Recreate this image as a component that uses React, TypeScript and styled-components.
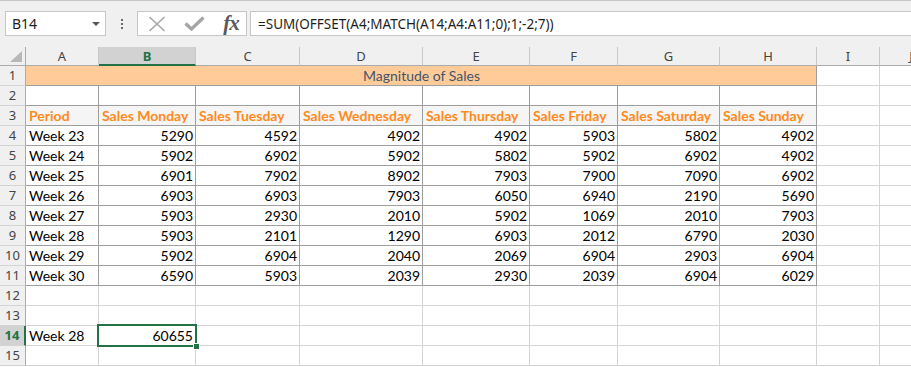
import styled, { createGlobalStyle } from "styled-components";

const GlobalStyle = createGlobalStyle`
  html, body {
    margin: 0;
    padding: 0;
    background: #ffffff;
    overflow: hidden;
  }
  body {
    font-family: Lato, "Liberation Sans", sans-serif;
  }
`;

const GREEN = "#217346";
const GRID = "#d4d4d4";
const EDGE = "#9e9e9e";
const UI_FONT = `"Noto Sans", "Open Sans", "Liberation Sans", sans-serif`;
const CELL_FONT = `Lato, "Liberation Sans", sans-serif`;

// widths include the 1px right border of each column
const COL_WIDTHS = [26, 73, 97, 104, 123, 107, 88, 102, 97, 63, 63];
const COLS = ["A", "B", "C", "D", "E", "F", "G", "H", "I", "J"];
const DAYS = ["Monday", "Tuesday", "Wednesday", "Thursday", "Friday", "Saturday", "Sunday"];

const weeks: [string, number[]][] = [
  ["Week 23", [5290, 4592, 4902, 4902, 5903, 5802, 4902]],
  ["Week 24", [5902, 6902, 5902, 5802, 5902, 6902, 4902]],
  ["Week 25", [6901, 7902, 8902, 7903, 7900, 7090, 6902]],
  ["Week 26", [6903, 6903, 7903, 6050, 6940, 2190, 5690]],
  ["Week 27", [5903, 2930, 2010, 5902, 1069, 2010, 7903]],
  ["Week 28", [5903, 2101, 1290, 6903, 2012, 6790, 2030]],
  ["Week 29", [5902, 6904, 2040, 2069, 6904, 2903, 6904]],
  ["Week 30", [6590, 5903, 2039, 2930, 2039, 6904, 6029]],
];

const Window = styled.div`
  width: 911px;
  height: 367px;
  overflow: hidden;
  display: flex;
  flex-direction: column;
  background: #ffffff;
`;

const FormulaBar = styled.div`
  height: 47px;
  flex: none;
  box-sizing: border-box;
  border-top: 1px solid #c6c6c6;
  background: #f0f0f0;
  display: flex;
  align-items: flex-start;
  padding: 10px 0 0 5px;
`;

const NameBox = styled.div`
  width: 101px;
  height: 25px;
  box-sizing: border-box;
  border: 1px solid #c6c6c6;
  background: #ffffff;
  display: flex;
  align-items: center;
  justify-content: space-between;
  padding: 0 5px 0 6px;
  font-family: ${UI_FONT};
  font-size: 14px;
  color: #1e1e1e;
`;

const DropArrow = styled.span`
  width: 0;
  height: 0;
  border-left: 4px solid transparent;
  border-right: 4px solid transparent;
  border-top: 4px solid #555555;
`;

const Grip = styled.div`
  width: 31px;
  height: 25px;
  display: flex;
  flex-direction: column;
  align-items: center;
  justify-content: center;
  gap: 2px;

  span {
    width: 2px;
    height: 2px;
    background: #6a6a6a;
  }
`;

const FxBox = styled.div`
  width: 110px;
  height: 25px;
  box-sizing: border-box;
  border: 1px solid #c6c6c6;
  background: #ffffff;
  display: flex;
  align-items: center;
  padding-left: 9px;
`;

const FxButton = styled.div<{ $w: number }>`
  width: ${(p) => p.$w}px;
  height: 23px;
  display: flex;
  align-items: center;
  justify-content: center;
`;

const FxLabel = styled.span`
  font-family: "Liberation Serif", "DejaVu Serif", serif;
  font-style: italic;
  font-weight: bold;
  font-size: 21px;
  color: #595959;
  letter-spacing: -1px;
  line-height: 1;
  margin-top: -1px;
`;

const FormulaInput = styled.div`
  flex: 1;
  height: 25px;
  margin-left: 3px;
  box-sizing: border-box;
  border: 1px solid #c6c6c6;
  border-right: none;
  background: #ffffff;
  display: flex;
  align-items: center;
  padding-left: 7px;
  font-family: ${UI_FONT};
  font-size: 13.5px;
  color: #1e1e1e;
  white-space: nowrap;
`;

const Sheet = styled.div`
  flex: 1;
  width: max-content;
  display: grid;
  grid-template-columns: ${COL_WIDTHS.map((w) => `${w}px`).join(" ")};
  grid-template-rows: 19px repeat(15, 20px);
  background: #ffffff;
`;

const Corner = styled.div`
  box-sizing: border-box;
  background: #f0f0f0;
  border-right: 1px solid #ababab;
  border-bottom: 1px solid #ababab;
  display: flex;
  align-items: flex-end;
  justify-content: flex-end;
  padding: 0 3px 3px 0;
`;

const ColHead = styled.div<{ $active?: boolean }>`
  box-sizing: border-box;
  background: ${(p) => (p.$active ? "#d2d2d2" : "#f0f0f0")};
  border-right: 1px solid #c8c8c8;
  border-bottom: ${(p) => (p.$active ? `2px solid ${GREEN}` : "1px solid #ababab")};
  font-family: ${UI_FONT};
  font-size: 13px;
  line-height: 19px;
  text-align: center;
  color: ${(p) => (p.$active ? GREEN : "#444444")};
  font-weight: ${(p) => (p.$active ? "bold" : "normal")};
  overflow: hidden;
`;

const RowHead = styled.div<{ $active?: boolean }>`
  box-sizing: border-box;
  background: ${(p) => (p.$active ? "#d2d2d2" : "#f0f0f0")};
  border-right: ${(p) => (p.$active ? `2px solid ${GREEN}` : "1px solid #ababab")};
  border-bottom: 1px solid ${GRID};
  font-family: ${UI_FONT};
  font-size: 13px;
  line-height: 19px;
  text-align: center;
  color: ${(p) => (p.$active ? GREEN : "#444444")};
  font-weight: ${(p) => (p.$active ? "bold" : "normal")};
`;

const Cell = styled.div<{
  $edge?: boolean;
  $align?: "left" | "right" | "center";
  $span?: number;
}>`
  box-sizing: border-box;
  grid-column: ${(p) => (p.$span ? `span ${p.$span}` : "auto")};
  border-right: 1px solid ${(p) => (p.$edge ? EDGE : GRID)};
  border-bottom: 1px solid ${(p) => (p.$edge ? EDGE : GRID)};
  background: #ffffff;
  padding: 0 2px 0 3px;
  font-family: ${CELL_FONT};
  font-size: 14px;
  line-height: 19px;
  color: #000000;
  text-align: ${(p) => p.$align ?? "left"};
  white-space: nowrap;
  overflow: hidden;
`;

const TitleCell = styled(Cell)`
  background: #ffcc99;
  color: #44546a;
`;

const HeaderCell = styled(Cell)`
  background: #f5f5f5;
  color: #ff8a1c;
  font-weight: bold;
`;

const ActiveCell = styled(Cell)`
  position: relative;
  overflow: visible;

  &::after {
    content: "";
    position: absolute;
    top: -2px;
    left: -2px;
    right: -2px;
    bottom: -2px;
    border: 2px solid ${GREEN};
    z-index: 1;
  }

  &::before {
    content: "";
    position: absolute;
    right: -5px;
    bottom: -5px;
    width: 5px;
    height: 5px;
    background: ${GREEN};
    border: 1px solid #ffffff;
    z-index: 2;
  }
`;

const CrossIcon = () => (
  <svg width="18" height="16" viewBox="0 0 18 16">
    <path d="M1.5 1 L16.5 15 M16.5 1 L1.5 15" stroke="#a6a6a6" strokeWidth="1.6" fill="none" />
  </svg>
);

const CheckIcon = () => (
  <svg width="21" height="15" viewBox="0 0 21 15">
    <path d="M1.5 7.5 L7.5 13 L19.5 1.5" stroke="#a6a6a6" strokeWidth="3.4" fill="none" />
  </svg>
);

const CornerMark = () => (
  <svg width="12" height="11" viewBox="0 0 12 11">
    <polygon points="12,0 12,11 0,11" fill="#b8b8b8" />
  </svg>
);

function Row({ n, children }: { n: number; children?: React.ReactNode }) {
  return (
    <>
      <RowHead $active={n === 14}>{n}</RowHead>
      {children}
    </>
  );
}

const blanks = (count: number, edge = 0) =>
  Array.from({ length: count }, (_, i) => <Cell key={i} $edge={i < edge} />);

export default function App() {
  return (
    <Window>
      <GlobalStyle />
      <FormulaBar>
        <NameBox>
          B14
          <DropArrow />
        </NameBox>
        <Grip>
          <span />
          <span />
          <span />
        </Grip>
        <FxBox>
          <FxButton $w={20}>
            <CrossIcon />
          </FxButton>
          <FxButton $w={17} />
          <FxButton $w={21}>
            <CheckIcon />
          </FxButton>
          <FxButton $w={15} />
          <FxButton $w={22}>
            <FxLabel>fx</FxLabel>
          </FxButton>
        </FxBox>
        <FormulaInput>=SUM(OFFSET(A4;MATCH(A14;A4:A11;0);1;-2;7))</FormulaInput>
      </FormulaBar>

      <Sheet>
        <Corner>
          <CornerMark />
        </Corner>
        {COLS.map((c) => (
          <ColHead key={c} $active={c === "B"}>
            {c}
          </ColHead>
        ))}

        <Row n={1}>
          <TitleCell $edge $span={8} $align="center">
            Magnitude of Sales
          </TitleCell>
          {blanks(2)}
        </Row>

        <Row n={2}>{blanks(10, 8)}</Row>

        <Row n={3}>
          <HeaderCell $edge>Period</HeaderCell>
          {DAYS.map((d) => (
            <HeaderCell key={d} $edge>
              Sales {d}
            </HeaderCell>
          ))}
          {blanks(2)}
        </Row>

        {weeks.map(([label, values], i) => (
          <Row key={label} n={4 + i}>
            <Cell $edge>{label}</Cell>
            {values.map((v, j) => (
              <Cell key={j} $edge $align="right">
                {v}
              </Cell>
            ))}
            {blanks(2)}
          </Row>
        ))}

        <Row n={12}>{blanks(10)}</Row>
        <Row n={13}>{blanks(10)}</Row>
        <Row n={14}>
          <Cell>Week 28</Cell>
          <ActiveCell $align="right">60655</ActiveCell>
          {blanks(8)}
        </Row>
        <Row n={15}>{blanks(10)}</Row>
      </Sheet>
    </Window>
  );
}
